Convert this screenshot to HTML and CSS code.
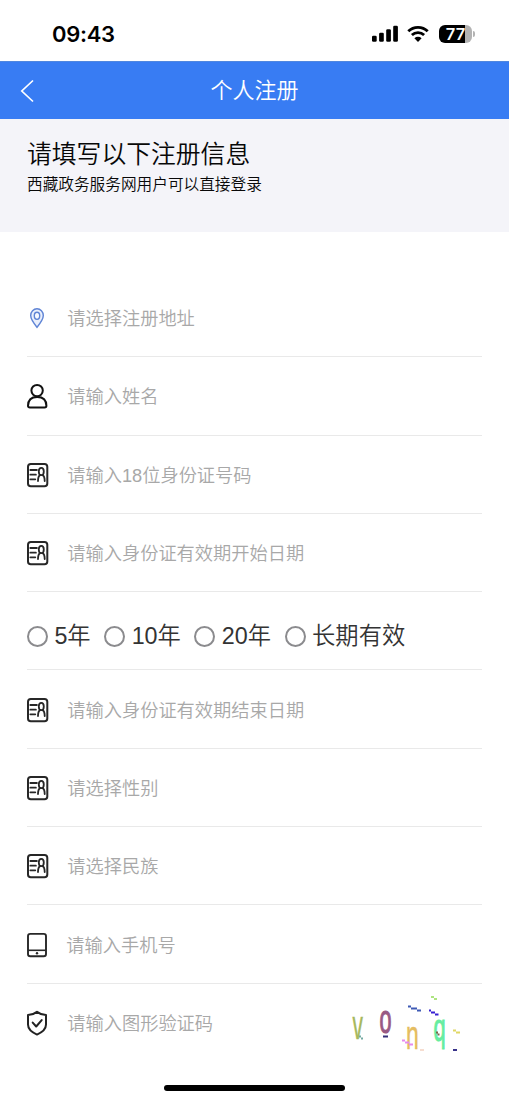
FILE: index.html
```html
<!DOCTYPE html>
<html lang="zh-CN">
<head>
<meta charset="utf-8">
<title>个人注册</title>
<link rel="stylesheet" href="styles.css">
</head>
<body>
<svg class="defs" width="0" height="0">
  <symbol id="card" viewBox="0 0 22 26">
    <rect x="1" y="1.900" width="19.300" height="22.400" rx="2.800" fill="none" stroke="#272727" stroke-width="2"/>
    <path d="M3.300 8h6.600M3.300 12.700h5.600M3.300 17.300h5" fill="none" stroke="#272727" stroke-width="1.800" stroke-linecap="round"/>
    <ellipse cx="14.300" cy="9.500" rx="2.500" ry="3.600" fill="none" stroke="#272727" stroke-width="1.800"/>
    <path d="M11 19c0-3.500.9-5.300 2.300-6.100M17.700 19c0-3.500-.9-5.300-2.300-6.100" fill="none" stroke="#272727" stroke-width="1.800" stroke-linecap="round"/>
  </symbol>
</svg>
<header class="status">
  <span class="time">09:43</span>
  <div class="indicators">
    <svg class="signal" width="27" height="18" viewBox="0 0 27 18"><rect x="0" y="10.800" width="4.700" height="6" rx="1.300"/><rect x="7.100" y="7.700" width="4.700" height="9.100" rx="1.300"/><rect x="14.200" y="4.200" width="4.700" height="12.600" rx="1.300"/><rect x="21.200" y="0.700" width="4.700" height="16.100" rx="1.300"/></svg>
    <svg class="wifi" width="22" height="18" viewBox="0 0 22 18"><path d="M1.300 6.300a13.800 13.800 0 0 1 19.400 0M4.900 10a8.800 8.800 0 0 1 12.200 0" fill="none" stroke="#000" stroke-width="2.800"/><path d="M7.400 13.300a5.200 5.200 0 0 1 7.200 0L11 17z"/></svg>
    <div class="battery"><span>77</span></div>
    <i class="battery-tip"></i>
  </div>
</header>
<nav class="navbar">
  <svg class="back" width="16" height="24" viewBox="0 0 16 24"><path d="M13 1.500L1.800 12 13 22.500" fill="none" stroke="#fff" stroke-width="1.700"/></svg>
  <h1>个人注册</h1>
</nav>
<section class="intro">
  <h2>请填写以下注册信息</h2>
  <p>西藏政务服务网用户可以直接登录</p>
</section>
<main class="form">
  <div class="row">
    <svg class="icon" viewBox="0 0 22 26"><path d="M10 22.300C6.700 18.200 3.700 14.500 3.700 10.500a6.300 6.800 0 0 1 12.600 0c0 4-3 7.700-6.300 11.800z" fill="#e9effc" stroke="#5f84d5" stroke-width="1.400"/><ellipse cx="10" cy="10.700" rx="2.700" ry="3.500" fill="#f7f9ff" stroke="#5f84d5" stroke-width="1.400"/></svg>
    <span class="placeholder">请选择注册地址</span>
  </div>
  <div class="row">
    <svg class="icon" viewBox="0 0 22 26"><g fill="none" stroke="#111" stroke-width="2"><circle cx="10.100" cy="7.600" r="5.700"/><path d="M1 22.800c0-5.500 3.300-8.900 9.200-8.900s9.200 3.400 9.200 8.900c0 1.200-.7 1.700-1.800 1.700H2.800c-1.100 0-1.800-.5-1.800-1.700z"/></g></svg>
    <span class="placeholder">请输入姓名</span>
  </div>
  <div class="row"><svg class="icon"><use href="#card"/></svg><span class="placeholder">请输入18位身份证号码</span></div>
  <div class="row"><svg class="icon"><use href="#card"/></svg><span class="placeholder">请输入身份证有效期开始日期</span></div>
  <div class="row options">
    <label><i class="radio"></i><span>5年</span></label>
    <label><i class="radio"></i><span>10年</span></label>
    <label><i class="radio"></i><span>20年</span></label>
    <label><i class="radio"></i><span>长期有效</span></label>
  </div>
  <div class="row"><svg class="icon"><use href="#card"/></svg><span class="placeholder">请输入身份证有效期结束日期</span></div>
  <div class="row"><svg class="icon"><use href="#card"/></svg><span class="placeholder">请选择性别</span></div>
  <div class="row"><svg class="icon"><use href="#card"/></svg><span class="placeholder">请选择民族</span></div>
  <div class="row phone">
    <svg class="icon" viewBox="0 0 22 26"><rect x="1" y="1.900" width="18" height="22.400" rx="2.300" fill="none" stroke="#272727" stroke-width="1.900"/><path d="M1 18.300h18" stroke="#272727" stroke-width="1.600"/><circle cx="10" cy="21.200" r="1.200" fill="#272727"/></svg>
    <span class="placeholder">请输入手机号</span>
  </div>
  <div class="row captcha-row">
    <svg class="icon" viewBox="0 0 22 26"><g fill="none" stroke="#222" stroke-width="2" stroke-linejoin="round"><path d="M10 1.900C7.600 3.800 4.600 4.900 1 5.100v9.500c0 4.700 3.900 7.800 9 10 5.100-2.200 9-5.300 9-10V5.100c-3.600-.2-6.600-1.300-9-3.200z"/><path d="M5.700 12.600l3.500 3.900 5.500-6.400" stroke-linecap="round"/></g></svg>
    <span class="placeholder">请输入图形验证码</span>
    <svg class="captcha" width="130" height="75" viewBox="0 0 130 75">
      <g stroke-width=".5">
      <text transform="translate(12.500 53.500) scale(.52 1)" font-size="40" fill="#a6b85c" stroke="#a6b85c">v</text>
      <text transform="translate(39.500 47.500) scale(.54 1)" font-size="40" fill="#985a83" stroke="#985a83" stroke-width="1.200">o</text>
      <text transform="translate(66 64) scale(.56 1)" font-size="41" fill="#e5bd60" stroke="#e5bd60">n</text>
      <text transform="translate(93.500 56) scale(.56 1)" font-size="39" fill="#66eda0" stroke="#66eda0" stroke-width="1.100">q</text>
      </g>
      <g fill="none" stroke-width="2">
        <path d="M68 21.500h3M71 23.500h6M77 25.500h4" stroke="#3f5bb5"/>
        <path d="M89 25.500h2M91 27.500h4M95 29.500h3.500" stroke="#3820d2"/>
        <path d="M91 12h3M94 14h3" stroke="#aee481"/>
        <path d="M43 51.500h5" stroke="#352e78"/>
        <path d="M62 55.500h3M65 57.500h4M69 59.500h4" stroke="#e68aef"/>
        <path d="M113 45.500h3M116 47.500h4" stroke="#e0d765"/>
        <path d="M113 65h4" stroke="#38328a"/>
        <path d="M80 65h4" stroke="#f6ddd0"/>
        <path d="M19 51.500h2M21 53.500h2" stroke="#74aaa2"/>
        <path d="M96 47.500h2M97.500 49.500h2" stroke="#7b6947"/>
      </g>
    </svg>
  </div>
</main>
<footer class="home"><i></i></footer>
</body>
</html>
```
FILE: styles.css
```css
* { box-sizing: border-box; }
body { margin: 0; width: 509px; height: 1102px; overflow: hidden; background: #fff; font-family: "Liberation Sans", "Noto Sans CJK SC", sans-serif; display: flex; flex-direction: column; }
h1, h2, p { margin: 0; font-weight: 300; }
.defs { position: absolute; }
.status { height: 61px; flex: none; display: flex; justify-content: space-between; padding: 0 34px 0 52px; }
.time { font: 600 22px/30px Inter, sans-serif; padding-top: 19px; letter-spacing: -.3px; }
.indicators { display: flex; align-items: flex-start; padding-top: 25px; }
.wifi { margin-left: 8px; }
.battery { width: 33px; height: 18px; margin-left: 10px; border-radius: 6px; background: linear-gradient(90deg, #000 25.500px, #b3b3b3 25.500px); color: #fff; font: 600 16.500px/18px Inter, sans-serif; text-align: center; }
.battery-tip { width: 2px; height: 6px; margin: 6px 0 0 1px; border-radius: 0 3px 3px 0; background: #b3b3b3; }
.navbar { height: 58px; flex: none; background: #387cf3; color: #fff; display: grid; grid-template-columns: 60px 1fr 60px; align-items: center; border-top: 1px solid #5087df; }
.back { margin-left: 20px; }
.navbar h1 { font-size: 22px; line-height: 30px; text-align: center; font-weight: 350; }
.intro { height: 113px; flex: none; background: #f4f4f9; padding: 18px 27px; color: #080808; }
.intro h2 { font-size: 24.800px; line-height: 36px; font-weight: 350; }
.intro p { font-size: 15.660px; line-height: 24px; font-weight: 350; }
.form { padding: 47px 27px 0; }
.row { height: 78.300px; display: flex; align-items: center; border-bottom: 1px solid #e9e9e9; padding-top: 1px; }
.icon { width: 22px; height: 26px; flex: none; }
.placeholder { margin-left: 18.300px; padding-top: 2px; font-size: 18.230px; line-height: 28px; font-weight: 350; color: #a8a8a8; white-space: nowrap; }
.phone .placeholder { margin-left: 17.300px; }
.options { color: #333; font-size: 23.300px; line-height: 34px; font-weight: 350; padding-top: 11px; gap: 13.600px; }
.options label { display: flex; align-items: center; white-space: nowrap; }
.radio { width: 21px; height: 21px; border: 2px solid #8b8b8e; border-radius: 50%; margin-right: 6.400px; }
.captcha-row { border: 0; }
.captcha { margin: -2px 12px 0 auto; font-family: "Liberation Sans", sans-serif; }
.home { flex: 1; display: flex; align-items: flex-end; justify-content: center; padding-bottom: 11px; }
.home i { width: 181px; height: 6px; border-radius: 3px; background: #000; }
```
